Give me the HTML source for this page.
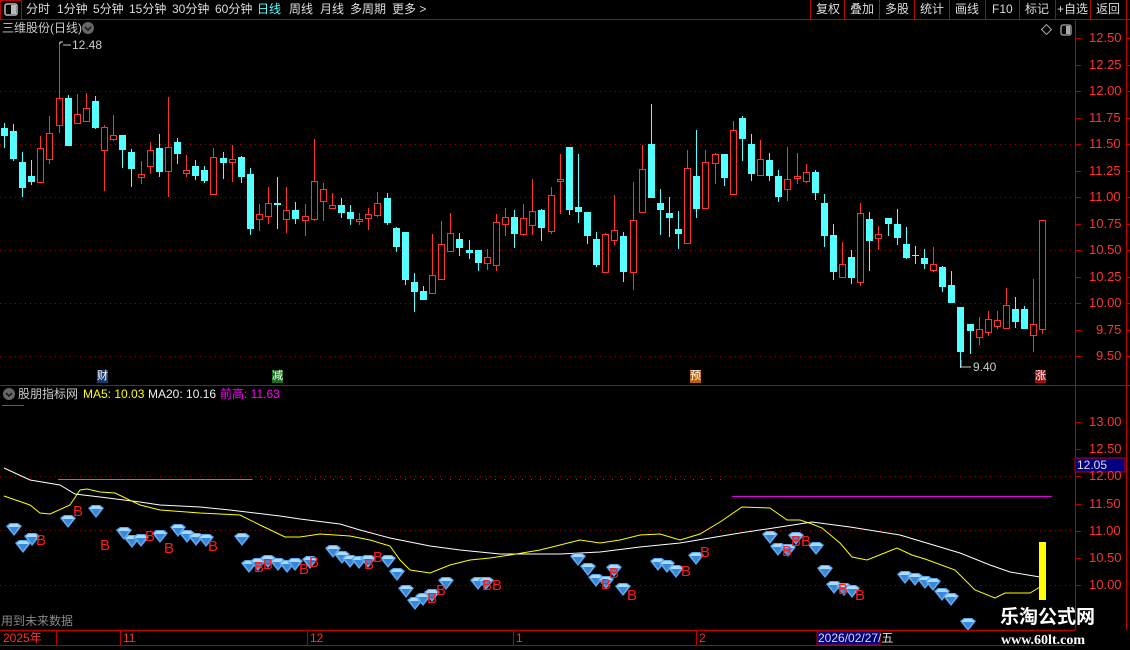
<!DOCTYPE html>
<html><head><meta charset="utf-8"><style>
*{margin:0;padding:0;box-sizing:border-box}
body{width:1130px;height:650px;background:#000;overflow:hidden;position:relative;font-family:"Liberation Sans","Noto Sans CJK SC",sans-serif;color:#ddd}
.t{position:absolute;white-space:nowrap;font-size:12px;line-height:15px}
svg{position:absolute;left:0;top:0}
</style></head><body>
<svg id="s" width="1130" height="650" viewBox="0 0 1130 650" xmlns="http://www.w3.org/2000/svg">
<defs>
<g id="dm"><polygon points="-8,-4 -4,-7 4,-7 8,-4 0,6" fill="#5aa8f0"/><polygon points="-6,-4 -3,-6 3,-6 6,-4 0,4" fill="#a8dcff"/><polygon points="-5,-3 5,-3 0,4" fill="#3c86d8"/></g>
</defs>
<line x1="0" y1="19.5" x2="1130" y2="19.5" stroke="#c00000"/>
<rect x="0.5" y="0.5" width="21" height="19" fill="none" stroke="#c00000"/>
<rect x="5" y="4" width="12" height="11" rx="2" fill="none" stroke="#bbb" stroke-width="1.5"/><rect x="11" y="5" width="5" height="9" fill="#bbb"/>
<g stroke="#c00000"><line x1="810.5" y1="0" x2="810.5" y2="19"/><line x1="844.5" y1="0" x2="844.5" y2="19"/><line x1="879.5" y1="0" x2="879.5" y2="19"/><line x1="914.5" y1="0" x2="914.5" y2="19"/><line x1="949.5" y1="0" x2="949.5" y2="19"/><line x1="985.5" y1="0" x2="985.5" y2="19"/><line x1="1019.5" y1="0" x2="1019.5" y2="19"/><line x1="1055.5" y1="0" x2="1055.5" y2="19"/><line x1="1090.5" y1="0" x2="1090.5" y2="19"/><line x1="1126.5" y1="0" x2="1126.5" y2="19"/></g>
<line x1="1075.5" y1="20" x2="1075.5" y2="630" stroke="#c00000"/>
<line x1="1126.5" y1="20" x2="1126.5" y2="630" stroke="#c00000"/>
<line x1="0" y1="385.5" x2="1130" y2="385.5" stroke="#c00000"/>
<g id="grid" stroke="#a00000" stroke-dasharray="1 4"></g>
<g id="ticks" stroke="#c00000"></g>
<g id="cand"></g>
<line x1="58" y1="479.5" x2="252" y2="479.5" stroke="#9a6aa8"/>
<line x1="252" y1="479.5" x2="725" y2="479.5" stroke="#d000d0" stroke-dasharray="1 8"/>
<line x1="732" y1="496.5" x2="1052" y2="496.5" stroke="#e000e0"/>
<line x1="2" y1="405.5" x2="24" y2="405.5" stroke="#e000e0"/>
<polyline fill="none" stroke="#fff" stroke-width="1" points="4,468 30,480 60,485 75,494 100,497 140,502 160,505 200,507 230,510 280,516 300,519 340,524 360,530 390,538 430,546 460,550 500,554 560,554 600,552 640,547 680,543 710,538 740,533 780,527 812,522 850,527 900,535 930,544 960,553 990,565 1010,572 1040,577"/>
<polyline fill="none" stroke="#ff0" stroke-width="1" points="4,496 30,505 40,513 50,514 70,505 80,490 87,489 100,492 115,493 140,505 160,510 200,513 240,515 260,525 285,537 300,537 320,534 350,536 370,540 390,546 400,560 410,570 430,573 450,565 470,560 490,558 510,555 540,550 560,545 580,540 600,543 620,540 640,535 660,534 680,540 700,534 720,522 742,507 770,508 787,520 800,520 812,524 822,528 840,543 852,557 867,560 897,548 912,555 925,559 955,570 975,590 995,598 1005,593 1030,593 1040,587"/>
<rect x="1039" y="542" width="7" height="58" fill="#ff0"/>
<g id="dms"></g>
<line x1="0" y1="630.5" x2="1075" y2="630.5" stroke="#c00000" stroke-width="1.5"/>
<line x1="0" y1="645.5" x2="1075" y2="645.5" stroke="#c00000"/>
<g stroke="#c00000"><line x1="56.5" y1="631" x2="56.5" y2="645"/><line x1="120.5" y1="631" x2="120.5" y2="645"/><line x1="307.5" y1="631" x2="307.5" y2="645"/><line x1="513.5" y1="631" x2="513.5" y2="645"/><line x1="696.5" y1="631" x2="696.5" y2="645"/></g>
<rect x="817" y="631" width="63" height="14" fill="#000080" stroke="#c00000"/>
<rect x="1075" y="458" width="50" height="14" fill="#000080" stroke="#c00000"/>
<rect x="1043" y="26" width="7" height="7" fill="none" stroke="#aaa" transform="rotate(45 1046.5 29.5)"/>
<rect x="1061" y="25" width="10" height="10" rx="2" fill="none" stroke="#aaa" stroke-width="1.3"/><rect x="1066" y="26" width="4" height="8" fill="#aaa"/>
<circle cx="88" cy="28" r="6" fill="#666"/><path d="M85 27l3 3 3-3" stroke="#111" fill="none" stroke-width="1.5"/>
<circle cx="9" cy="394" r="6" fill="#666"/><path d="M6 393l3 3 3-3" stroke="#111" fill="none" stroke-width="1.5"/>
<line x1="59.5" y1="42" x2="59.5" y2="60" stroke="#ff3232"/>
<path d="M60 42h3M60 42v2M63 45h8" stroke="#ccc" fill="none"/>
<path d="M961 360v7h10" stroke="#ccc" fill="none"/>
</svg>
<div class="t" style="left:26px;top:2px">分时</div>
<div class="t" style="left:57px;top:2px">1分钟</div>
<div class="t" style="left:93px;top:2px">5分钟</div>
<div class="t" style="left:129px;top:2px">15分钟</div>
<div class="t" style="left:172px;top:2px">30分钟</div>
<div class="t" style="left:215px;top:2px">60分钟</div>
<div class="t" style="left:257px;top:2px;color:#54ffff">日线</div>
<div class="t" style="left:289px;top:2px">周线</div>
<div class="t" style="left:320px;top:2px">月线</div>
<div class="t" style="left:350px;top:2px">多周期</div>
<div class="t" style="left:392px;top:2px">更多 &gt;</div>
<div class="t" style="left:816px;top:2px">复权</div>
<div class="t" style="left:850px;top:2px">叠加</div>
<div class="t" style="left:885px;top:2px">多股</div>
<div class="t" style="left:920px;top:2px">统计</div>
<div class="t" style="left:955px;top:2px">画线</div>
<div class="t" style="left:992px;top:2px">F10</div>
<div class="t" style="left:1025px;top:2px">标记</div>
<div class="t" style="left:1057px;top:2px">+自选</div>
<div class="t" style="left:1096px;top:2px">返回</div>
<div class="t" style="left:2px;top:21px;color:#ccc">三维股份(日线)</div>
<div class="t" style="left:72px;top:38px;color:#ccc">12.48</div>
<div class="t" style="left:973px;top:360px;color:#ccc">9.40</div>
<div class="t" style="left:97px;top:370px;font-size:11px;background:#1a3a70;color:#fff;line-height:13px">财</div>
<div class="t" style="left:272px;top:370px;font-size:11px;background:#1c6a1c;color:#fff;line-height:13px">减</div>
<div class="t" style="left:690px;top:370px;font-size:11px;background:#c06000;color:#fff;line-height:13px">预</div>
<div class="t" style="left:1035px;top:370px;font-size:11px;background:#9a1010;color:#fff;line-height:13px">涨</div>
<div class="t" style="left:18px;top:387px;color:#ccc">股朋指标网</div>
<div class="t" style="left:83px;top:387px;color:#ff0">MA5: 10.03</div>
<div class="t" style="left:148px;top:387px;color:#eee">MA20: 10.16</div>
<div class="t" style="left:220px;top:387px;color:#f0f">前高: 11.63</div>
<div id="axl"></div>
<div class="t" style="left:1077px;top:458px;color:#ddd">12.05</div>
<div class="t" style="left:1px;top:614px;color:#888">用到未来数据</div>
<div class="t" style="left:3px;top:631px;color:#ff3232">2025年</div>
<div class="t" style="left:123px;top:631px;color:#ff3232">11</div>
<div class="t" style="left:310px;top:631px;color:#ff3232">12</div>
<div class="t" style="left:516px;top:631px;color:#ff3232">1</div>
<div class="t" style="left:699px;top:631px;color:#ff3232">2</div>
<div class="t" style="left:818px;top:631px;color:#ddd">2026/02/27/五</div>
<div class="t" style="left:1000px;top:607px;font-size:19px;line-height:22px;font-weight:bold;color:#fff">乐淘公式网</div>
<div class="t" style="left:1001px;top:633px;font-size:14px;font-family:'Liberation Serif',serif;font-weight:bold;color:#fff">www.60lt.com</div>
<script>
var C=[[4,123,128,136,148,0],[13,124,131,159,161,0],[22,152,162,188,197,0],[31,160,176,182,185,0],[40,136,148,182,182,1],[49,116,133,159,164,1],[59,42,98,125,133,1],[68,95,98,146,146,0],[77,94,114,123,123,1],[86,93,108,121,121,1],[95,96,101,128,129,0],[104,125,127,150,191,1],[113,115,135,139,141,1],[122,135,135,150,168,0],[131,149,152,169,187,0],[141,161,174,177,184,1],[150,142,150,166,174,1],[159,134,148,172,177,0],[168,97,147,171,197,1],[177,138,142,154,164,0],[186,155,170,173,177,1],[195,160,166,176,180,0],[204,166,170,181,183,0],[213,148,157,194,194,1],[223,152,158,163,179,0],[232,145,159,162,182,1],[241,156,157,177,183,0],[250,168,174,229,235,0],[259,204,214,219,231,1],[268,187,203,216,224,1],[277,177,203,205,229,0],[286,187,210,219,233,1],[295,202,210,219,224,0],[305,204,216,220,236,1],[314,139,181,219,221,1],[323,183,189,201,221,1],[332,193,205,208,208,1],[341,198,205,213,218,0],[350,205,212,219,225,0],[359,213,219,221,225,1],[368,208,214,218,230,1],[377,192,203,215,217,1],[387,193,198,223,225,0],[396,227,228,247,252,0],[405,232,232,280,285,0],[414,273,282,292,312,0],[423,286,291,300,300,0],[432,234,275,293,293,1],[441,221,244,279,279,1],[450,213,233,251,251,1],[459,233,239,248,256,0],[469,240,250,253,259,0],[478,250,250,263,271,0],[487,249,257,263,270,1],[496,214,222,265,271,1],[505,208,217,224,236,1],[514,210,217,234,248,0],[523,204,218,234,236,1],[532,179,211,225,235,1],[541,209,210,228,241,0],[551,187,195,231,234,1],[560,154,179,181,214,1],[569,147,147,210,215,0],[578,154,207,212,223,0],[587,212,212,236,244,0],[596,232,239,265,267,0],[605,233,234,272,272,1],[614,195,230,240,245,1],[623,232,236,272,282,0],[633,182,220,272,290,1],[642,145,169,212,213,1],[651,104,144,198,198,0],[660,189,203,210,235,0],[669,197,213,218,237,0],[678,211,229,234,249,0],[687,150,168,243,243,1],[696,130,176,209,218,0],[705,150,162,208,209,1],[715,153,154,163,184,1],[724,154,154,178,186,0],[733,121,130,194,194,1],[742,116,118,139,161,0],[751,134,144,174,181,0],[760,140,159,175,176,1],[769,153,160,176,181,0],[778,170,176,197,202,0],[787,147,179,189,201,1],[797,153,176,178,184,1],[806,164,172,181,183,1],[815,170,172,193,200,0],[824,194,203,236,247,0],[833,224,235,272,280,0],[842,242,264,277,277,1],[851,250,257,278,284,0],[860,203,213,282,286,1],[869,212,219,241,271,0],[878,226,234,238,250,1],[888,218,218,224,236,0],[897,209,224,238,245,0],[906,227,244,258,259,0],[915,246,255,256,264,0],[924,249,258,264,269,0],[933,247,264,270,272,1],[942,266,267,287,292,0],[951,271,285,303,303,0],[960,307,307,352,368,0],[970,324,324,331,354,0],[979,317,329,337,345,1],[988,311,319,332,336,1],[997,311,320,326,329,1],[1006,288,305,328,328,1],[1015,297,309,322,328,0],[1024,306,309,329,329,0],[1033,279,324,335,352,1],[1042,220,220,329,334,1]];
var h='';C.forEach(function(c){var x=c[0],col=c[5]?'#ff3232':'#54ffff';
if(c[5]){h+='<line x1="'+(x+.5)+'" y1="'+c[1]+'" x2="'+(x+.5)+'" y2="'+c[2]+'" stroke="'+col+'"/><line x1="'+(x+.5)+'" y1="'+c[3]+'" x2="'+(x+.5)+'" y2="'+c[4]+'" stroke="'+col+'"/><rect x="'+(x-3+.5)+'" y="'+(c[2]+.5)+'" width="6" height="'+Math.max(1,c[3]-c[2])+'" fill="#000" stroke="'+col+'"/>';}
else{h+='<line x1="'+(x+.5)+'" y1="'+c[1]+'" x2="'+(x+.5)+'" y2="'+c[4]+'" stroke="'+col+'"/><rect x="'+(x-3)+'" y="'+c[2]+'" width="7" height="'+Math.max(1,c[3]-c[2])+'" fill="'+col+'"/>';}});
document.getElementById('cand').innerHTML=h;
var g='';[91,144,197,250,303,356,476,530,585].forEach(function(y){g+='<line x1="0" y1="'+(y+.5)+'" x2="1075" y2="'+(y+.5)+'"/>';});
document.getElementById('grid').innerHTML=g;
var t='',a='';var up=['12.50','12.25','12.00','11.75','11.50','11.25','11.00','10.75','10.50','10.25','10.00','9.75','9.50'];
up.forEach(function(v,i){var y=Math.round(38+i*26.5);t+='<line x1="1075" y1="'+(y+.5)+'" x2="1081" y2="'+(y+.5)+'"/><line x1="1126" y1="'+(y+.5)+'" x2="1130" y2="'+(y+.5)+'"/>';a+='<div class="t" style="font-size:13px;left:'+(v.length>4?1089:1096)+'px;top:'+(y-8)+'px;color:#ff3232">'+v+'</div>';});
['13.00','12.50','12.00','11.50','11.00','10.50','10.00'].forEach(function(v,i){var y=Math.round(422+i*27.2);t+='<line x1="1075" y1="'+(y+.5)+'" x2="1081" y2="'+(y+.5)+'"/>';a+='<div class="t" style="font-size:13px;left:1089px;top:'+(y-8)+'px;color:#ff3232">'+v+'</div>';});
document.getElementById('ticks').innerHTML=t;document.getElementById('axl').innerHTML=a;
var D=[[14,530],[23,547],[32,540],[68,522],[96,512],[124,534],[132,542],[141,541],[160,537],[178,531],[187,537],[196,540],[206,541],[242,540],[249,567],[258,565],[268,562],[278,565],[287,567],[295,565],[310,563],[333,552],[342,558],[350,562],[359,563],[368,562],[388,562],[397,575],[406,592],[415,604],[423,600],[432,596],[446,584],[478,584],[486,584],[578,560],[588,570],[596,581],[606,583],[614,571],[623,590],[658,565],[667,567],[676,572],[696,559],[770,538],[778,550],[788,551],[796,539],[816,549],[825,572],[834,588],[844,590],[852,592],[905,578],[915,580],[925,583],[933,585],[942,595],[951,600],[968,625]];
var B=[[78,510],[41,539],[105,544],[150,535],[169,547],[213,545],[259,566],[268,563],[304,568],[314,561],[369,563],[378,556],[432,597],[441,589],[487,584],[497,584],[614,572],[606,583],[632,594],[686,570],[705,551],[787,550],[796,540],[806,540],[843,588],[860,594]];
var d='';D.forEach(function(p){d+='<use href="#dm" x="'+p[0]+'" y="'+p[1]+'"/>';});
B.forEach(function(p){d+='<text x="'+(p[0]-5)+'" y="'+(p[1]+6)+'" fill="#ff1a1a" font-size="15" font-family="Liberation Sans,sans-serif">B</text>';});
document.getElementById('dms').innerHTML=d;
</script>
</body></html>
